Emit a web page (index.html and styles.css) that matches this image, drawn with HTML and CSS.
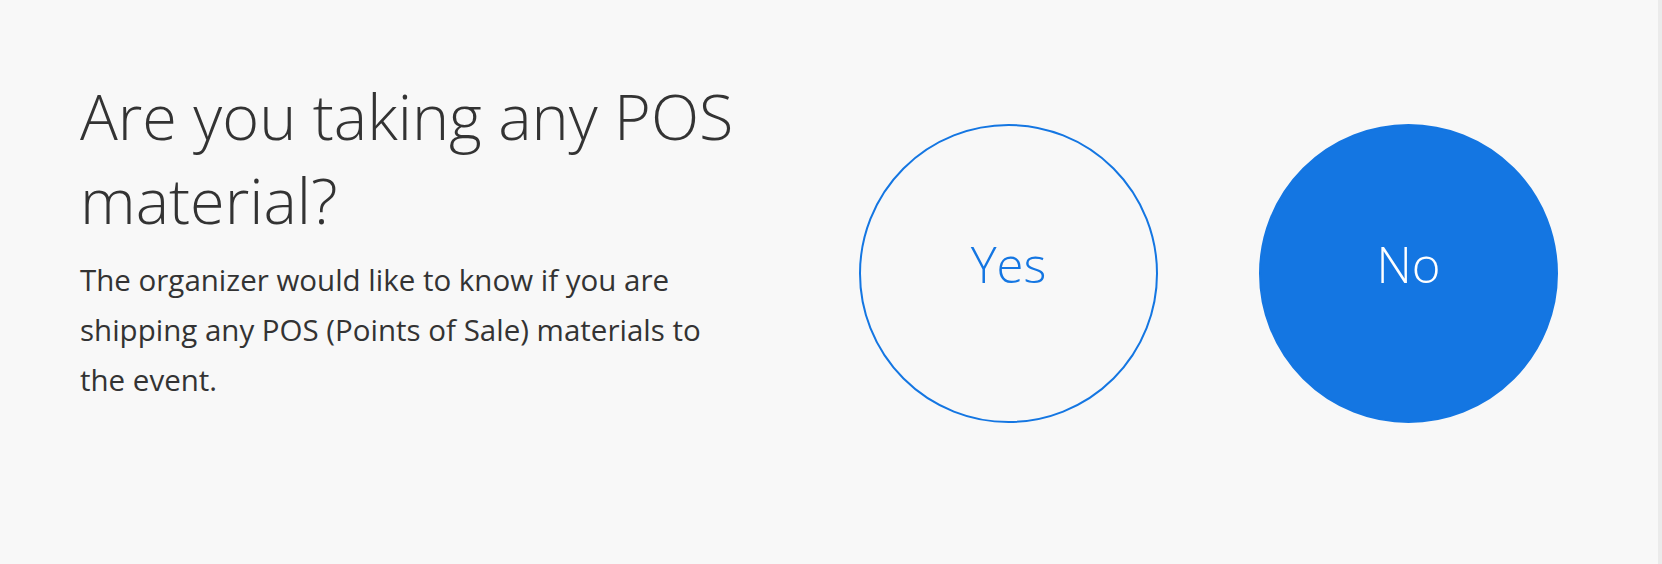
FILE: index.html
```html
<!DOCTYPE html>
<html lang="en">
<head>
<meta charset="utf-8">
<title>POS material</title>
<link rel="stylesheet" href="styles.css">
</head>
<body>
<div class="page">
  <main class="question">
    <section class="intro">
      <h1 class="title">Are you taking any POS material?</h1>
      <p class="desc">The organizer would like to know if you are shipping any POS (Points of Sale) materials to the event.</p>
    </section>
    <div class="choices">
      <button class="choice choice-yes" type="button">Yes</button>
      <button class="choice choice-no" type="button">No</button>
    </div>
  </main>
  <div class="rail"></div>
</div>
</body>
</html>
```
FILE: styles.css
```css
* { box-sizing: border-box; }
html, body {
  margin: 0;
  padding: 0;
  height: 100%;
}
body {
  background: #f8f8f8;
  color: #333333;
  font-family: "Open Sans", "Liberation Sans", sans-serif;
  overflow: hidden;
}
.page {
  display: flex;
  height: 564px;
}
.question {
  flex: 1;
  display: flex;
  align-items: flex-start;
  padding: 74px 0 0 80px;
}
.intro {
  width: 664px;
  flex: none;
}
.title {
  margin: 0;
  font-family: "Open Sans", sans-serif;
  font-weight: 300;
  font-size: 63px;
  line-height: 84px;
  color: #333333;
  letter-spacing: 0;
}
.desc {
  margin: 13px 0 0 0;
  font-family: "Open Sans", sans-serif;
  font-weight: 400;
  font-size: 29.5px;
  line-height: 50px;
  color: #333333;
}
.choices {
  display: flex;
  gap: 101px;
  margin: 50px 0 0 115px;
}
.choice {
  width: 299px;
  height: 299px;
  border-radius: 50%;
  border: 2px solid #1476e2;
  background: transparent;
  font-family: "Open Sans", sans-serif;
  font-weight: 300;
  font-size: 49px;
  line-height: 1;
  padding: 0 0 18px 0;
  display: flex;
  align-items: center;
  justify-content: center;
  cursor: pointer;
}
.choice-yes {
  color: #1476e2;
}
.choice-no {
  background: #1476e2;
  color: #ffffff;
}
.rail {
  width: 4px;
  flex: none;
  background: #ebebeb;
}
```
